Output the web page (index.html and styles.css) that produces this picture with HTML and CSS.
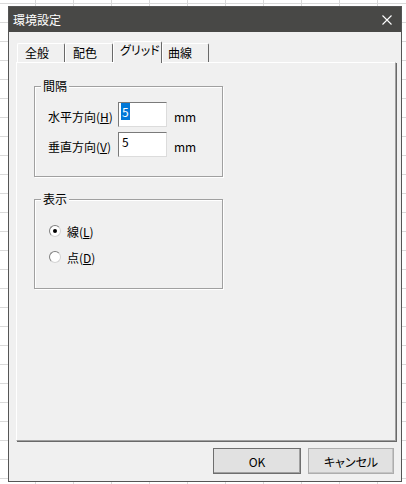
FILE: index.html
```html
<!DOCTYPE html>
<html lang="ja">
<head>
    <meta charset="UTF-8">
    <meta name="viewport" content="width=device-width, initial-scale=1.0">
    <title>環境設定</title>
    <link rel="stylesheet" href="styles.css">
</head>
<body>
    <div class="dialog">
        <div class="titlebar">
            <span class="title">環境設定</span>
            <span class="close">
                <svg width="10" height="10" viewBox="0 0 10 10">
                    <path d="M0.5 0.5 L9.5 9.5 M9.5 0.5 L0.5 9.5" stroke="#fff" stroke-width="1.1" fill="none"/>
                </svg>
            </span>
        </div>
        <div class="dialog-body">
            <div class="tabs">
                <div class="tab tab-1">全般</div>
                <div class="tab tab-2">配色</div>
                <div class="tab tab-3 active">グリッド</div>
                <div class="tab tab-4">曲線</div>
            </div>
            <div class="panel">
                <fieldset class="group group-spacing">
                    <legend>間隔</legend>
                    <div class="field-row">
                        <label class="field-label">水平方向(<u>H</u>)</label>
                        <div class="edit"><span class="sel">5</span></div>
                        <span class="unit">mm</span>
                    </div>
                    <div class="field-row">
                        <label class="field-label">垂直方向(<u>V</u>)</label>
                        <div class="edit"><span>5</span></div>
                        <span class="unit">mm</span>
                    </div>
                </fieldset>
                <fieldset class="group group-view">
                    <legend>表示</legend>
                    <div class="radio-row">
                        <span class="radio checked"></span>
                        <span>線(<u>L</u>)</span>
                    </div>
                    <div class="radio-row">
                        <span class="radio"></span>
                        <span>点(<u>D</u>)</span>
                    </div>
                </fieldset>
            </div>
            <div class="buttons">
                <button class="btn btn-ok">OK</button>
                <button class="btn btn-cancel">キャンセル</button>
            </div>
        </div>
    </div>
</body>
</html>
```

FILE: styles.css
```css
body {
    margin: 0;
    font-family: "Noto Sans CJK JP", sans-serif;
    font-size: 12px;
    color: #000;
    background-color: #fff;
    background-image: linear-gradient(#d9d9d9 1px, transparent 1px),
                      linear-gradient(90deg, #d9d9d9 1px, transparent 1px);
    background-size: 100% 19px, 38px 100%;
    background-position: 0 3px, 35px 0;
}
.dialog {
    margin: 6px 0 0 8px;
    width: 394px;
    height: 476px;
    box-sizing: border-box;
    border: 1px solid #555;
    background: #f0f0f0;
    display: flex;
    flex-direction: column;
}
.titlebar {
    height: 25px;
    flex-shrink: 0;
    background: #484846;
    color: #fff;
    display: flex;
    align-items: center;
    justify-content: space-between;
    padding: 0 9px 0 4px;
}
.title {
    line-height: 16px;
}
.close {
    display: flex;
}
.dialog-body {
    flex: 1;
    padding: 9px 5px 8px 7px;
    display: flex;
    flex-direction: column;
}
.tabs {
    display: flex;
    align-items: flex-end;
    height: 21px;
    padding-left: 1px;
    position: relative;
    z-index: 1;
}
.tab {
    height: 19px;
    box-sizing: border-box;
    flex-shrink: 0;
    padding-left: 7px;
    line-height: 18px;
    white-space: nowrap;
    font-feature-settings: "palt";
    border-top: 1px solid #fff;
    border-left: 1px solid #fff;
    border-right: 1px solid #696969;
    border-radius: 2px 2px 0 0;
}
.tab-1 { width: 48px; }
.tab-2 { width: 48px; }
.tab-3 { width: 49px; padding-left: 6px; }
.tab-4 { width: 47px; padding-left: 5px; }
.tab.active {
    height: 22px;
    margin-bottom: -1px;
    background: #f0f0f0;
    line-height: 16px;
}
.panel {
    height: 379px;
    box-sizing: border-box;
    border-top: 1px solid #fff;
    border-left: 1px solid #fff;
    border-right: 1px solid #a0a0a0;
    border-bottom: 1px solid #a0a0a0;
    box-shadow: 1px 1px 0 #696969;
    padding: 15px 0 0 17px;
}
.group {
    margin: 0;
    width: 189px;
    box-sizing: border-box;
    border: 1px solid #a0a0a0;
    box-shadow: 1px 1px 0 #fff, inset 1px 1px 0 #fff;
    padding: 8px 0 19px 6px;
}
.group legend {
    padding: 0 2px;
    line-height: 16px;
    background: #f0f0f0;
}
.group-view {
    margin-top: 14px;
    padding: 16px 0 23px 6px;
}
.field-row {
    display: flex;
    align-items: center;
    height: 25px;
    padding-left: 7px;
}
.field-row + .field-row {
    margin-top: 5px;
}
.field-label {
    width: 70px;
    padding-top: 4px;
}
.unit {
    margin-left: 7px;
    padding-top: 3px;
}
.edit {
    width: 49px;
    height: 25px;
    box-sizing: border-box;
    background: #fff;
    border: 1px solid;
    border-color: #7a7a7a #dcdcdc #dcdcdc #7a7a7a;
    padding: 0 2px;
    line-height: 17px;
}
.edit span {
    display: inline-block;
    padding: 0 1px;
}
.edit .sel {
    background: #0078d7;
    color: #fff;
}
.radio-row {
    display: flex;
    align-items: center;
    height: 16px;
    padding-left: 8px;
}
.radio-row + .radio-row {
    margin-top: 10px;
}
.radio {
    width: 12px;
    height: 12px;
    box-sizing: border-box;
    border-radius: 50%;
    border: 1px solid;
    border-color: #808080 #d4d4d4 #d4d4d4 #808080;
    background: #fff;
    margin-right: 6px;
    display: flex;
    align-items: center;
    justify-content: center;
}
.radio.checked::after {
    content: "";
    width: 4px;
    height: 4px;
    border-radius: 50%;
    background: #000;
}
.buttons {
    display: flex;
    justify-content: flex-end;
    gap: 7px;
    margin-top: 7px;
    padding-right: 2px;
}
.btn {
    height: 26px;
    box-sizing: border-box;
    font-family: "Noto Sans CJK JP", sans-serif;
    font-size: 12px;
    font-feature-settings: "palt";
    color: #000;
    background: #e1e1e1;
    border: 1px solid #adadad;
    padding: 0;
}
.btn-ok {
    width: 88px;
    border-color: #6e6e6e;
    box-shadow: inset -1px -1px 0 #a0a0a0;
}
.btn-cancel {
    width: 86px;
    box-shadow: inset -1px -1px 0 #c4c4c4;
}
```
